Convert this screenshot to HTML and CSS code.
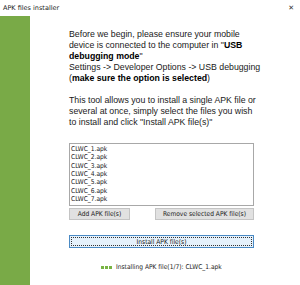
FILE: index.html
```html
<!DOCTYPE html>
<html>
<head>
<meta charset="utf-8">
<link rel="stylesheet" href="styles.css">
</head>
<body>
<div class="window">
  <div class="titlebar">
    <span class="title">APK files installer</span>
    <span class="close">&#x2715;</span>
  </div>
  <div class="main">
    <div class="sidebar"></div>
    <div class="content">
      <p class="intro">Before we begin, please ensure your mobile<br>device is connected to the computer in "<b>USB<br>debugging mode</b>"<br>Settings -&gt; Developer Options -&gt; USB debugging<br>(<b>make sure the option is selected</b>)</p>
      <p class="intro second">This tool allows you to install a single APK file or<br>several at once, simply select the files you wish<br>to install and click "Install APK file(s)"</p>
      <div class="listbox">
        <div class="item">CLWC_1.apk</div>
        <div class="item">CLWC_2.apk</div>
        <div class="item">CLWC_3.apk</div>
        <div class="item">CLWC_4.apk</div>
        <div class="item">CLWC_5.apk</div>
        <div class="item">CLWC_6.apk</div>
        <div class="item">CLWC_7.apk</div>
      </div>
      <div class="btnrow">
        <div class="btn add">Add APK file(s)</div>
        <div class="btn remove">Remove selected APK file(s)</div>
      </div>
      <div class="btn install"><span class="focus">Install APK file(s)</span></div>
      <div class="status">
        <div class="progress"><i></i><i></i><i></i></div>
        <span class="stext">Installing APK file(1/7): CLWC_1.apk</span>
      </div>
    </div>
  </div>
</div>
</body>
</html>
```
FILE: styles.css
```css
html, body {
  margin: 0;
  padding: 0;
  background: #ffffff;
}
.window {
  width: 300px;
  height: 285px;
  display: flex;
  flex-direction: column;
  overflow: hidden;
}
.titlebar {
  height: 16px;
  display: flex;
  align-items: center;
  justify-content: space-between;
  padding: 0 6px 0 3px;
  font-family: "DejaVu Sans", sans-serif;
  font-size: 6.5px;
  color: #1a1a1a;
}
.close {
  font-size: 7px;
  color: #333;
}
.main {
  flex: 1;
  display: flex;
}
.sidebar {
  width: 30px;
  background: #79aa47;
}
.content {
  width: 185px;
  padding: 13px 0 0 39px;
  display: flex;
  flex-direction: column;
}
.intro {
  margin: 0;
  font-family: "Liberation Sans", Arial, sans-serif;
  font-size: 8.75px;
  line-height: 11px;
  color: #1a1a1a;
  white-space: nowrap;
}
.intro b {
  font-weight: bold;
  color: #000;
}
.intro.second {
  margin-top: 11px;
}
.listbox {
  margin-top: 15px;
  height: 60px;
  border: 1px solid #a8a8a8;
  padding: 1px 0 0 1px;
  font-family: "DejaVu Sans Condensed", "DejaVu Sans", sans-serif;
  font-size: 6.6px;
  line-height: 8.33px;
  color: #1a1a1a;
}
.btnrow {
  margin-top: 2px;
  display: flex;
  justify-content: space-between;
}
.btn {
  box-sizing: border-box;
  height: 12px;
  background: #e1e1e1;
  border: 1px solid #c4c4c4;
  font-family: "DejaVu Sans Condensed", "DejaVu Sans", sans-serif;
  font-size: 6.6px;
  color: #1a1a1a;
  display: flex;
  align-items: center;
  justify-content: center;
}
.add { width: 61px; }
.remove { width: 99px; }
.install {
  margin-top: 15px;
  height: 13px;
  background: #e5f1fb;
  border: 1px solid #4a8ac4;
  padding: 1px;
}
.focus {
  flex: 1;
  align-self: stretch;
  display: flex;
  align-items: center;
  justify-content: center;
  border: 1px dotted #333;
}
.status {
  margin-top: 15px;
  display: flex;
  align-items: center;
  padding-left: 32px;
  gap: 4px;
  font-family: "DejaVu Sans Condensed", "DejaVu Sans", sans-serif;
  font-size: 6.6px;
  color: #1a1a1a;
}
.progress {
  display: flex;
  gap: 1px;
}
.progress i {
  display: block;
  width: 3px;
  height: 3px;
  background: #78b444;
}
```
